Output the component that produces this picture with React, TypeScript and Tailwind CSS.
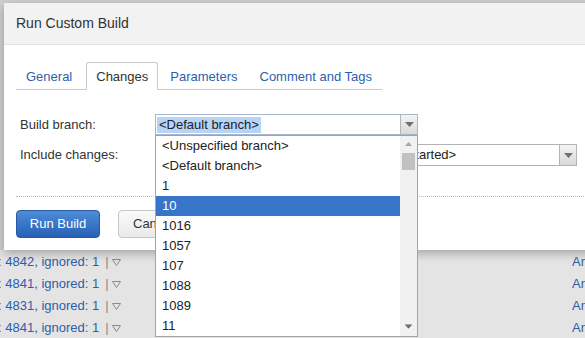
import React from "react";

const font = "font-['Liberation_Sans',Arial,sans-serif]";

const branches = [
  "<Unspecified branch>",
  "<Default branch>",
  "1",
  "10",
  "1016",
  "1057",
  "107",
  "1088",
  "1089",
  "11",
];

const pageRows = ["4842", "4841", "4831", "4841"];

function ArrowDown({ className = "" }: { className?: string }) {
  return (
    <svg className={className} width="9" height="5" viewBox="0 0 9 5">
      <path d="M0 0h9L4.5 5z" fill="#6f6f6f" />
    </svg>
  );
}

function SelectButton() {
  return (
    <div className="flex w-[17px] shrink-0 items-center justify-center border-l border-[#b5b5b5] bg-linear-to-b from-[#f4f4f4] to-[#d9d9d9]">
      <ArrowDown />
    </div>
  );
}

export default function App() {
  return (
    <div className={`relative h-[338px] w-[585px] overflow-hidden bg-[#d2d2d2] text-[13px] ${font}`}>
      {/* page behind the modal */}
      <div className="flex h-full flex-col pt-[250px]">
        <div className="flex flex-1 flex-col bg-[#e4e4e4]">
          {pageRows.map((n, i) => (
            <div key={i} className="flex h-[22px] shrink-0 items-center pt-[2px] text-[#2c5ea9]">
              <span className="-ml-[2px]">: {n}, ignored: 1</span>
              <span className="ml-[6px] text-[#888]">|</span>
              <svg className="ml-[3px]" width="9" height="7" viewBox="0 0 9 7">
                <path d="M0.5 0.5h8L4.5 6.5z" fill="none" stroke="#8a8a8a" />
              </svg>
              <span className="ml-auto w-[13px] overflow-hidden whitespace-nowrap">Anna</span>
            </div>
          ))}
        </div>
      </div>

      {/* dialog */}
      <div className="absolute left-[4px] top-[3px] flex h-[247px] w-[620px] flex-col bg-white shadow-[0_3px_10px_rgba(0,0,0,0.3)]">
        <div className="flex h-[42px] items-center border-b border-[#e3e3e3] bg-[#f2f2f2] pl-[12px] text-[14px] text-[#333]">
          Run Custom Build
        </div>

        <div className="flex flex-col px-[12px]">
          {/* tabs */}
          <div className="mt-[17px] flex w-fit gap-[2px] border-b border-[#c9c9c9]">
            {["General", "Changes", "Parameters", "Comment and Tags"].map((t) => (
              <div
                key={t}
                className={
                  t === "Changes"
                    ? "-mb-px flex h-[28px] items-center rounded-t-[3px] border border-b-white border-[#c9c9c9] bg-white px-[9px] pt-[2px] text-[#333]"
                    : "flex h-[27px] items-center border border-transparent px-[9px] pt-[2px] text-[#2d5fab]" +
                      (t === "General" ? " pr-[11px]" : "")
                }
              >
                {t}
              </div>
            ))}
          </div>

          {/* form */}
          <div className="mt-[24px] flex flex-col pl-[4px] text-[#333]">
            <div className="flex h-[21px] items-center">
              <div className="w-[135px]">Build branch:</div>
              <div className="relative flex h-[21px] w-[263px] border border-[#a7b6cf]">
                <div className="flex flex-1 items-center pl-[1px]">
                  <span className="bg-[#b7d3f6] px-[2px] leading-[16px] text-[#222]">&lt;Default branch&gt;</span>
                </div>
                <SelectButton />

                {/* open dropdown */}
                <div className="absolute left-[-1px] top-[20px] z-10 flex h-[202px] w-[263px] border border-[#a3a3a3] bg-white">
                  <div className="flex flex-1 flex-col">
                    {branches.map((b) => (
                      <div
                        key={b}
                        className={
                          b === "10"
                            ? "flex h-[20px] items-center bg-[#3675c8] pl-[6px] text-white"
                            : "flex h-[20px] items-center pl-[6px] text-[#222]"
                        }
                      >
                        {b}
                      </div>
                    ))}
                  </div>
                  <div className="flex w-[17px] flex-col items-center bg-[#f1f1f1]">
                    <svg className="mt-[6px]" width="7" height="4" viewBox="0 0 7 4">
                      <path d="M0 4h7L3.5 0z" fill="#a8a8a8" />
                    </svg>
                    <div className="mt-[7px] h-[17px] w-[13px] bg-[#c1c1c1]" />
                    <div className="flex-1" />
                    <ArrowDown className="mb-[7px] scale-90" />
                  </div>
                </div>
              </div>
            </div>

            <div className="mt-[9px] flex h-[22px] items-center">
              <div className="w-[135px]">Include changes:</div>
              <div className="flex h-[22px] w-[422px] border border-[#b3b3b3]">
                <div className="flex flex-1 items-center overflow-hidden whitespace-nowrap pl-[1px] text-[#222]">
                  &lt;Latest changes at the moment the build is started&gt;
                </div>
                <SelectButton />
              </div>
            </div>
          </div>
        </div>

        <div className="ml-[12px] mt-[30px] border-t border-dotted border-[#b9b9b9]" />

        <div className="ml-[12px] mt-[13px] flex gap-[18px]">
          <button className="h-[28px] w-[84px] rounded-[4px] border border-[#2a5aa3] bg-linear-to-b from-[#4f8cd8] to-[#2661b4] text-white">
            Run Build
          </button>
          <button className="h-[28px] w-[70px] rounded-[4px] border border-[#c6c6c6] bg-linear-to-b from-[#fbfbfb] to-[#e9e9e9] pl-[14px] text-left text-[#333]">
            Cancel
          </button>
        </div>
      </div>
    </div>
  );
}
